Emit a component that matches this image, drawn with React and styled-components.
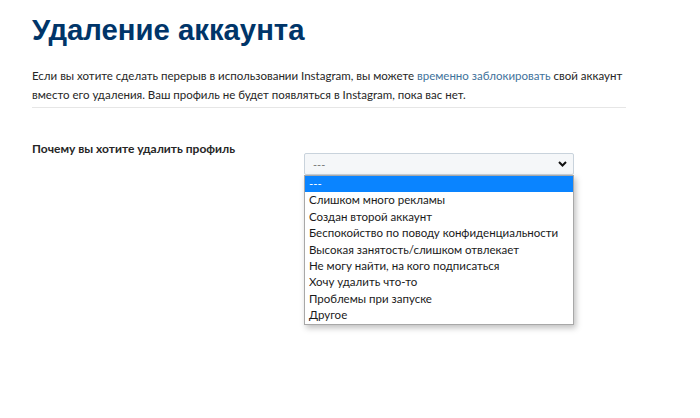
import React, {useState} from 'react'
import styled, {createGlobalStyle} from 'styled-components'

const Global = createGlobalStyle`
    body{
        margin:0;
        background:#fff;
        font-family:Lato, "Open Sans", sans-serif;
        color:#262626;
    }
`

const Page = styled.main`
    width:626px;
    min-height:418px;
    box-sizing:border-box;
    padding:12px 0 0 32px;
    h1{
        margin:0;
        font-family:"Liberation Sans", Arial, sans-serif;
        font-size:29.3px;
        font-weight:bold;
        color:#003569;
        line-height:36px;
    }
`

const Intro = styled.p`
    margin:18px 0 0;
    font-size:11.5px;
    line-height:19px;
    padding-bottom:3px;
    border-bottom:1px solid #e6e6e6;
    a{
        color:#3f729b;
        text-decoration:none;
    }
`

const Row = styled.div`
    display:grid;
    grid-template-columns:272px 270px;
    margin-top:33px;
    label{
        font-size:12px;
        font-weight:bold;
        color:#262626;
        line-height:16px;
    }
`

const SelectWrap = styled.div`
    position:relative;
    margin-top:12px;
`

const SelectBox = styled.div`
    height:22px;
    box-sizing:border-box;
    border:1px solid #c9d3dc;
    border-radius:2px;
    background:#f5f7f9;
    display:flex;
    align-items:center;
    justify-content:space-between;
    padding:0 6px 0 8px;
    font-size:11px;
    color:#777;
`

const List = styled.ul`
    position:absolute;
    top:22px;
    left:0;
    width:270px;
    margin:0;
    padding:0;
    list-style:none;
    box-sizing:border-box;
    background:#fff;
    border:1px solid #a8a8a8;
    box-shadow:2px 3px 6px rgba(0,0,0,.25);
`

const Option = styled.li`
    height:16.4px;
    line-height:16.4px;
    padding:0 4px;
    font-size:11.5px;
    color:${p => p.$active ? '#fff' : '#1a1a1a'};
    background:${p => p.$active ? '#0a84ff' : 'transparent'};
    white-space:nowrap;
`

const reasons = [
    '---',
    'Слишком много рекламы',
    'Создан второй аккаунт',
    'Беспокойство по поводу конфиденциальности',
    'Высокая занятость/слишком отвлекает',
    'Не могу найти, на кого подписаться',
    'Хочу удалить что-то',
    'Проблемы при запуске',
    'Другое'
]

const App = () => {
    const [active] = useState(0)
    return (
        <Page>
            <Global/>
            <h1>Удаление аккаунта</h1>
            <Intro>
                Если вы хотите сделать перерыв в использовании Instagram, вы можете <a href="#">временно заблокировать</a> свой аккаунт вместо его удаления. Ваш профиль не будет появляться в Instagram, пока вас нет.
            </Intro>
            <Row>
                <label>Почему вы хотите удалить профиль</label>
                <SelectWrap>
                    <SelectBox>
                        <span>---</span>
                        <svg width="9" height="6" viewBox="0 0 9 6"><path d="M1 1l3.5 3.5L8 1" fill="none" stroke="#111" strokeWidth="2"/></svg>
                    </SelectBox>
                    <List>
                        {reasons.map((r, i) => (
                            <Option key={r} $active={i === active}>{r}</Option>
                        ))}
                    </List>
                </SelectWrap>
            </Row>
        </Page>
    )
}

export default App
